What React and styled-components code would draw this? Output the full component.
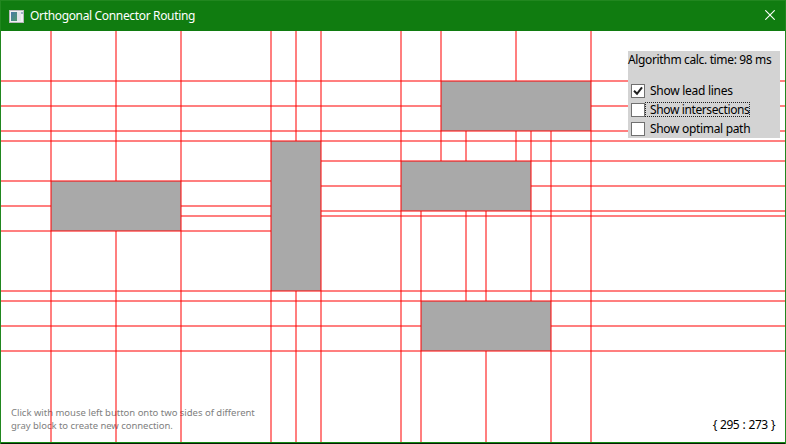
import React, { useState } from "react";
import styled, { createGlobalStyle } from "styled-components";

const GlobalStyle = createGlobalStyle`
  * { box-sizing: border-box; }
  body { margin: 0; overflow: hidden; font-family: "Noto Sans", "Open Sans", sans-serif; }
`;

const Window = styled.main`
  display: flex;
  flex-direction: column;
  width: 786px;
  height: 444px;
  background: #fff;
  border: 1px solid #21871f;
  border-bottom: 0;
`;

const TitleBar = styled.header`
  display: flex;
  align-items: center;
  flex: 0 0 30px;
  padding: 0 10px 0 8px;
  background: #107c10;
  color: #fff;
`;

const Title = styled.h1`
  flex: 1;
  margin: 0 0 0 6px;
  font-size: 12px;
  line-height: 16px;
  font-weight: 400;
  white-space: nowrap;
  letter-spacing: ${(p) => p.$tracking}px;
`;

const CloseButton = styled.button`
  display: flex;
  padding: 0 0 2px;
  border: 0;
  background: none;
  color: inherit;
`;

const Canvas = styled.section`
  position: relative;
  flex: 1;
  border-bottom: 1px solid #041f04;
  box-shadow: inset 0 -1px #168a16;
`;

const Diagram = styled.svg`
  display: block;
  position: relative;
`;

const OptionsPanel = styled.aside`
  position: absolute;
  top: 20px;
  right: 5px;
  width: 152px;
  height: 87px;
  background: #d3d3d3;
  color: #000;
`;

const Timing = styled.p`
  margin: 0 0 13px;
  font-size: 12px;
  line-height: 17px;
  white-space: nowrap;
  letter-spacing: ${(p) => p.$tracking}px;
`;

const Option = styled.label`
  display: flex;
  align-items: center;
  height: 19px;
  padding-left: 3px;
`;

const HiddenInput = styled.input`
  appearance: none;
  width: 0;
  height: 0;
  margin: 0;
`;

const Box = styled.span`
  display: flex;
  width: 14px;
  height: 14px;
  border: 1px solid #707070;
  background: #fff;
`;

const OptionText = styled.span`
  height: 15px;
  padding: 0 0 0 4px;
  border: 1px dotted ${(p) => (p.$focused ? "#222" : "transparent")};
  font-size: 12px;
  line-height: 13px;
  white-space: nowrap;
  letter-spacing: ${(p) => p.$tracking}px;
`;

const Hint = styled.p`
  position: absolute;
  left: 10px;
  bottom: 11px;
  margin: 0;
  color: #808080;
  font-size: 9.5px;
  line-height: 13px;
  white-space: nowrap;
`;

const HintLine = styled.span`
  display: block;
  letter-spacing: ${(p) => p.$tracking}px;
`;

const Coordinates = styled.output`
  position: absolute;
  right: 10px;
  bottom: 10px;
  font-size: 12px;
  line-height: 16px;
  white-space: nowrap;
  letter-spacing: ${(p) => p.$tracking}px;
  word-spacing: 0.7px;
`;

const RIGHT = 784;
const BOTTOM = 411;

const blocks = [
  { x: 50, y: 150, w: 130, h: 50 },
  { x: 270, y: 110, w: 50, h: 150 },
  { x: 440, y: 50, w: 150, h: 50 },
  { x: 400, y: 130, w: 130, h: 50 },
  { x: 420, y: 270, w: 130, h: 50 },
];

// [x, from, to]
const verticalLeads = [
  [50, 0, BOTTOM], [115, 0, 150], [115, 200, BOTTOM], [180, 0, BOTTOM],
  [270, 0, BOTTOM], [295, 0, 110], [295, 260, BOTTOM], [320, 0, BOTTOM],
  [400, 0, BOTTOM], [420, 180, BOTTOM], [440, 0, 130],
  [465, 100, 130], [465, 180, 270], [485, 180, 270], [485, 320, BOTTOM],
  [515, 0, 50], [515, 100, 130], [530, 100, 270], [550, 100, BOTTOM],
  [590, 0, BOTTOM],
];

// [y, from, to]
const horizontalLeads = [
  [50, 0, RIGHT], [75, 0, 440], [75, 590, RIGHT], [100, 0, RIGHT],
  [110, 0, RIGHT], [130, 320, RIGHT], [150, 0, 270], [155, 320, 400],
  [155, 530, RIGHT], [175, 0, 50], [175, 180, 270], [180, 320, RIGHT],
  [185, 180, 270], [185, 320, RIGHT], [200, 0, 270], [260, 0, RIGHT],
  [270, 0, RIGHT], [295, 0, 420], [295, 550, RIGHT], [320, 0, RIGHT],
];

const options = [
  { id: "leads", label: "Show lead lines", tracking: -0.27 },
  { id: "intersections", label: "Show intersections", tracking: -0.38, focused: true },
  { id: "path", label: "Show optimal path", tracking: -0.32 },
];

function AppIcon() {
  return (
    <svg width="15" height="13" viewBox="0 0 15 13">
      <defs>
        <linearGradient id="pane" x1="0" y1="0" x2="1" y2="1">
          <stop offset="0" stopColor="#4878a8" />
          <stop offset="1" stopColor="#4d9a6c" />
        </linearGradient>
      </defs>
      <rect width="15" height="13" fill="#b9b9bd" />
      <rect x="1" y="1" width="13" height="11" fill="#f0f0f3" />
      <rect x="2" y="2" width="6" height="9" fill="url(#pane)" />
      <rect x="8" y="2" width="4" height="9" fill="#e2e4ea" />
      <rect x="12" y="2" width="2" height="2" fill="#9fb0c8" />
    </svg>
  );
}

function CheckMark() {
  return (
    <svg width="12" height="12" viewBox="0 0 12 12">
      <path d="M2 5.8 L5 8.8 L10 2.3" fill="none" stroke="#212121" strokeWidth="2" />
    </svg>
  );
}

export default function App() {
  const [checked, setChecked] = useState({ leads: true });
  const toggle = (id) => setChecked((c) => ({ ...c, [id]: !c[id] }));

  return (
    <>
      <GlobalStyle />
      <Window>
        <TitleBar>
          <AppIcon />
          <Title $tracking={-0.34}>Orthogonal Connector Routing</Title>
          <CloseButton aria-label="Close">
            <svg width="10" height="10" viewBox="0 0 10 10">
              <path d="M0.3 0.3 L9.7 9.7 M9.7 0.3 L0.3 9.7" stroke="currentColor" strokeWidth="1.1" />
            </svg>
          </CloseButton>
        </TitleBar>
        <Canvas>
          <Hint>
            <HintLine $tracking={-0.02}>Click with mouse left button onto two sides of different</HintLine>
            <HintLine $tracking={-0.04}>gray block to create new connection.</HintLine>
          </Hint>
          <Diagram width={RIGHT} height={BOTTOM}>
            {blocks.map((b) => (
              <rect key={`${b.x}-${b.y}`} x={b.x} y={b.y} width={b.w} height={b.h} fill="#a9a9a9" />
            ))}
            {checked.leads && (
              <g stroke="#f00" strokeWidth="2" strokeOpacity="0.5">
                {verticalLeads.map(([x, from, to]) => (
                  <line key={`v${x}-${from}`} x1={x} x2={x} y1={from} y2={to} />
                ))}
                {horizontalLeads.map(([y, from, to]) => (
                  <line key={`h${y}-${from}`} x1={from} x2={to} y1={y} y2={y} />
                ))}
              </g>
            )}
          </Diagram>
          <OptionsPanel>
            <Timing $tracking={-0.35}>Algorithm calc. time: 98 ms</Timing>
            {options.map((o) => (
              <Option key={o.id}>
                <HiddenInput type="checkbox" checked={!!checked[o.id]} onChange={() => toggle(o.id)} />
                <Box>{checked[o.id] && <CheckMark />}</Box>
                <OptionText $focused={o.focused} $tracking={o.tracking}>{o.label}</OptionText>
              </Option>
            ))}
          </OptionsPanel>
          <Coordinates $tracking={-0.5}>{"{ 295 : 273 }"}</Coordinates>
        </Canvas>
      </Window>
    </>
  );
}
